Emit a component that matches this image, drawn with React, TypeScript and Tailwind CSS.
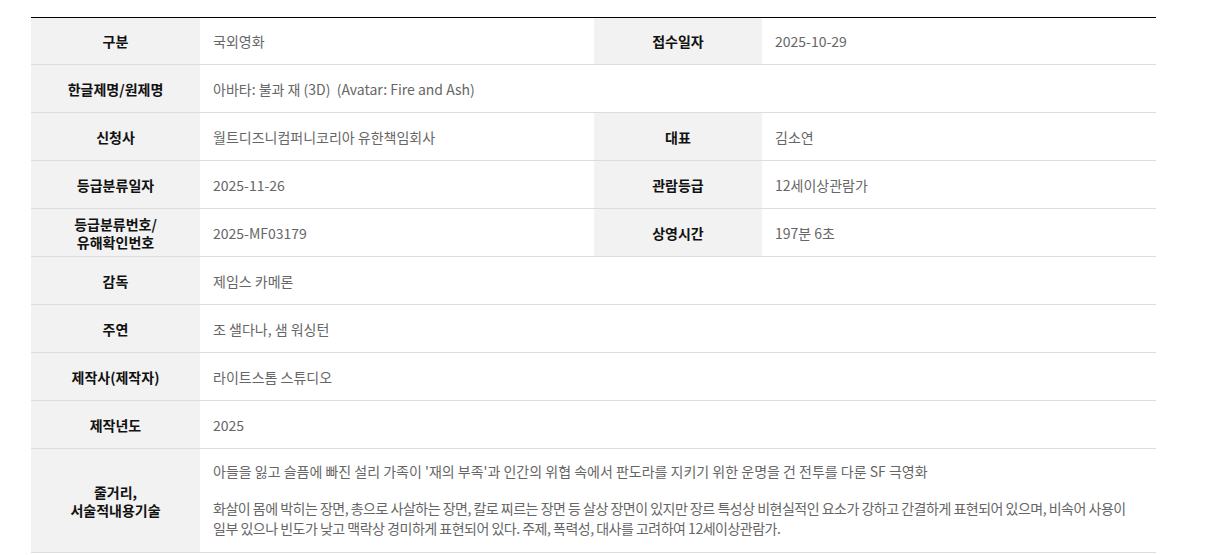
import React from "react";

const th = "bg-[#f2f2f2] text-center font-bold text-[14px] leading-[18px] text-[#111] border-b border-[#dddddd] px-3";
const td = "text-left text-[14px] leading-[20px] text-[#666] border-b border-[#dddddd] pl-[13px] pr-3";

export default function App() {
  return (
    <div className="bg-white min-h-screen pt-[17px] pl-[31px] font-['Noto_Sans_CJK_KR','Noto_Sans',sans-serif]">
      <table className="w-[1125px] table-fixed border-collapse border-t border-black">
        <colgroup>
          <col className="w-[169px]" />
          <col className="w-[394px]" />
          <col className="w-[168px]" />
          <col className="w-[394px]" />
        </colgroup>
        <tbody>
          <tr className="h-[47px]">
            <th className={th}>구분</th>
            <td className={td}>국외영화</td>
            <th className={th}>접수일자</th>
            <td className={td}>2025-10-29</td>
          </tr>
          <tr className="h-[48px]">
            <th className={th}>한글제명/원제명</th>
            <td className={`${td} whitespace-pre`} colSpan={3}>아바타: 불과 재 (3D)  (Avatar: Fire and Ash)</td>
          </tr>
          <tr className="h-[48px]">
            <th className={th}>신청사</th>
            <td className={td}>월트디즈니컴퍼니코리아 유한책임회사</td>
            <th className={th}>대표</th>
            <td className={td}>김소연</td>
          </tr>
          <tr className="h-[48px]">
            <th className={th}>등급분류일자</th>
            <td className={td}>2025-11-26</td>
            <th className={th}>관람등급</th>
            <td className={td}>12세이상관람가</td>
          </tr>
          <tr className="h-[48px]">
            <th className={th}>
              등급분류번호/
              <br />
              유해확인번호
            </th>
            <td className={td}>2025-MF03179</td>
            <th className={th}>상영시간</th>
            <td className={td}>197분 6초</td>
          </tr>
          <tr className="h-[48px]">
            <th className={th}>감독</th>
            <td className={td} colSpan={3}>제임스 카메론</td>
          </tr>
          <tr className="h-[48px]">
            <th className={th}>주연</th>
            <td className={td} colSpan={3}>조 샐다나, 샘 워싱턴</td>
          </tr>
          <tr className="h-[48px]">
            <th className={th}>제작사(제작자)</th>
            <td className={td} colSpan={3}>라이트스톰 스튜디오</td>
          </tr>
          <tr className="h-[48px]">
            <th className={th}>제작년도</th>
            <td className={td} colSpan={3}>2025</td>
          </tr>
          <tr>
            <th className={th}>
              줄거리,
              <br />
              서술적내용기술
            </th>
            <td className={`${td} pt-[12px] pb-[14px]`} colSpan={3}>
              <p>아들을 잃고 슬픔에 빠진 설리 가족이 '재의 부족'과 인간의 위협 속에서 판도라를 지키기 위한 운명을 건 전투를 다룬 SF 극영화</p>
              <p className="mt-[17px] tracking-[-0.5px] break-keep">
                화살이 몸에 박히는 장면, 총으로 사살하는 장면, 칼로 찌르는 장면 등 살상 장면이 있지만 장르 특성상 비현실적인 요소가 강하고 간결하게 표현되어 있으며, 비속어 사용이 일부 있으나 빈도가 낮고 맥락상 경미하게 표현되어 있다. 주제, 폭력성, 대사를 고려하여 12세이상관람가.
              </p>
            </td>
          </tr>
        </tbody>
      </table>
    </div>
  );
}
